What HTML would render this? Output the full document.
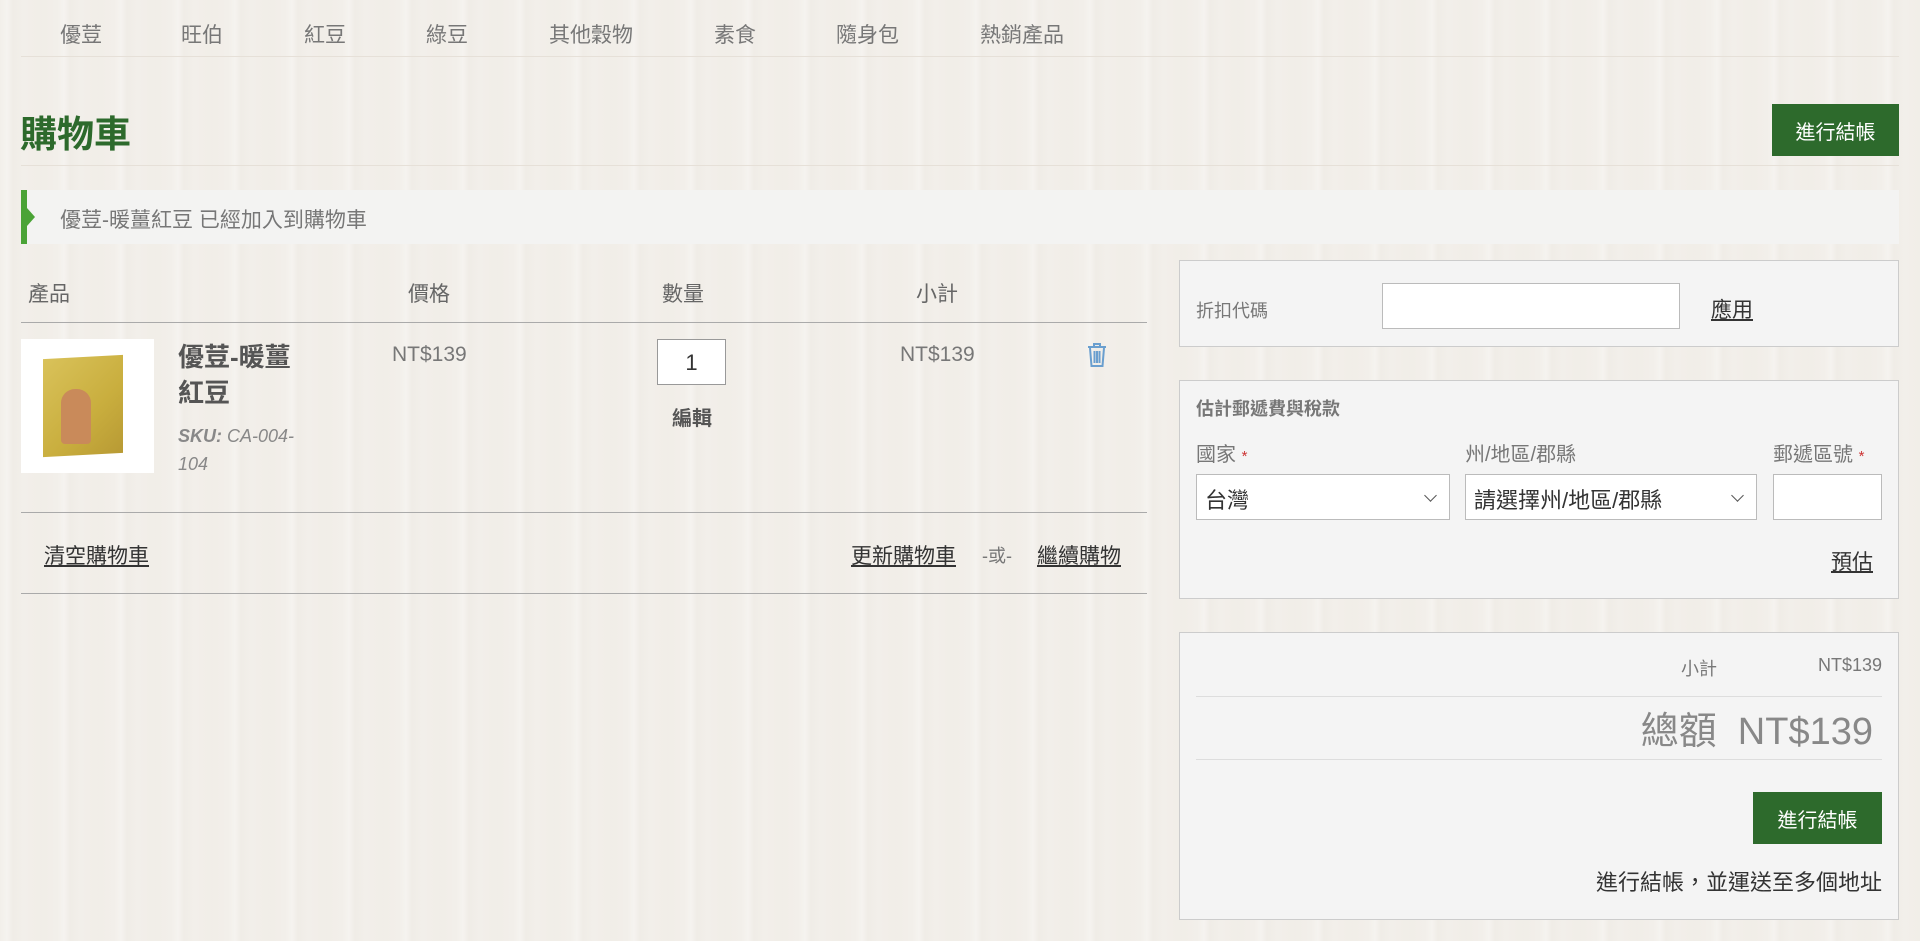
<!DOCTYPE html>
<html><head><meta charset="utf-8"><style>
*{box-sizing:border-box;margin:0;padding:0}
body{width:1920px;height:941px;overflow:hidden;position:relative;font-family:"Liberation Sans","Noto Sans CJK TC",sans-serif;color:#666;
background:#f2efea;
background-image:repeating-linear-gradient(90deg,rgba(255,255,255,0) 0,rgba(255,255,255,.25) 7px,rgba(220,212,200,.1) 13px,rgba(255,255,255,0) 23px,rgba(235,228,218,.15) 41px,rgba(255,255,255,0) 57px);}
.a{position:absolute;white-space:nowrap}
.nav{top:19px;font-size:21px;color:#777}
.u{text-decoration:underline;color:#333}
.box{position:absolute;background:#f4f4f4;border:1px solid #ccc}
.btn{position:absolute;background:#2d6a2c;color:#fff;font-size:20px;display:flex;align-items:center;justify-content:center}
.inp{position:absolute;background:#fff;border:1px solid #bbb}
.sel{position:absolute;background:#fff;border:1px solid #bbb;font-size:22px;color:#333;padding:8px 0 0 8px}
.sel:after{content:"";position:absolute;right:14px;top:16px;width:8px;height:8px;border-right:1.5px solid #555;border-bottom:1.5px solid #555;transform:rotate(45deg)}
.line{position:absolute;height:1px;background:#bbb}
.st{color:#c33;font-size:15px}
</style></head><body>
<div class="a nav" style="left:60px">優荳</div>
<div class="a nav" style="left:181px">旺伯</div>
<div class="a nav" style="left:304px">紅豆</div>
<div class="a nav" style="left:426px">綠豆</div>
<div class="a nav" style="left:549px">其他穀物</div>
<div class="a nav" style="left:714px">素食</div>
<div class="a nav" style="left:836px">隨身包</div>
<div class="a nav" style="left:980px">熱銷產品</div>
<div class="line" style="left:21px;width:1878px;top:56px;background:#e6e0d8"></div>
<div class="a" style="left:20px;top:104px;font-size:37px;font-weight:bold;color:#2d6a2c">購物車</div>
<div class="btn" style="left:1772px;top:104px;width:127px;height:52px">進行結帳</div>
<div class="line" style="left:21px;width:1878px;top:165px;background:#e6e0d8"></div>
<div class="a" style="left:21px;top:190px;width:1878px;height:54px;background:#f3f3f2"></div>
<div class="a" style="left:21px;top:190px;width:6px;height:54px;background:#4aa336"></div>
<div class="a" style="left:27px;top:208px;border-left:8px solid #4aa336;border-top:9px solid transparent;border-bottom:9px solid transparent"></div>
<div class="a" style="left:60px;top:204px;font-size:21px;color:#777">優荳-暖薑紅豆 已經加入到購物車</div>
<div class="a" style="left:28px;top:278px;font-size:21px">產品</div>
<div class="a" style="left:408px;top:278px;font-size:21px">價格</div>
<div class="a" style="left:662px;top:278px;font-size:21px">數量</div>
<div class="a" style="left:916px;top:278px;font-size:21px">小計</div>
<div class="line" style="left:21px;width:1126px;top:322px;background:#aaa"></div>
<div class="a" style="left:21px;top:339px;width:133px;height:134px;background:#fff">
<div style="position:absolute;left:22px;top:18px;width:80px;height:98px;background:linear-gradient(135deg,#d9c25a,#c9ae3e 60%,#b89a34);transform:skewY(-3deg)"></div>
<div style="position:absolute;left:40px;top:50px;width:30px;height:55px;border-radius:14px 14px 4px 4px;background:#c98a5a"></div></div>
<div class="a" style="left:178px;top:339px;font-size:26px;font-weight:bold;color:#555;line-height:36px">優荳-暖薑<br>紅豆</div>
<div class="a" style="left:178px;top:422px;font-size:18px;font-style:italic;color:#888;line-height:28px"><b>SKU:</b> CA-004-<br>104</div>
<div class="a" style="left:392px;top:343px;font-size:21px;color:#777">NT$139</div>
<div class="inp" style="left:657px;top:339px;width:69px;height:46px;border-color:#999;font-size:22px;color:#333;text-align:center;padding-top:10px">1</div>
<div class="a" style="left:672px;top:402px;font-size:20px;font-weight:bold;color:#555">編輯</div>
<div class="a" style="left:900px;top:343px;font-size:21px;color:#777">NT$139</div>
<svg class="a" style="left:1086px;top:342px" width="22" height="26" viewBox="0 0 22 26"><g fill="none" stroke="#6a9fcf" stroke-width="2"><path d="M2 5h18M8 5V2h6v3M4 6l1.5 18h11L18 6M8.5 9v12M11 9v12M13.5 9v12"/></g></svg>
<div class="line" style="left:21px;width:1126px;top:512px;background:#aaa"></div>
<div class="a u" style="left:44px;top:540px;font-size:21px">清空購物車</div>
<div class="a u" style="left:851px;top:540px;font-size:21px">更新購物車</div>
<div class="a" style="left:982px;top:542px;font-size:18px;color:#777">-或-</div>
<div class="a u" style="left:1037px;top:540px;font-size:21px">繼續購物</div>
<div class="line" style="left:21px;width:1126px;top:593px;background:#aaa"></div>

<div class="box" style="left:1179px;top:260px;width:720px;height:87px"></div>
<div class="a" style="left:1196px;top:297px;font-size:18px;color:#777">折扣代碼</div>
<div class="inp" style="left:1382px;top:283px;width:298px;height:46px"></div>
<div class="a u" style="left:1711px;top:294px;font-size:21px">應用</div>

<div class="box" style="left:1179px;top:380px;width:720px;height:219px"></div>
<div class="a" style="left:1196px;top:395px;font-size:18px;font-weight:bold;color:#777">估計郵遞費與稅款</div>
<div class="a" style="left:1196px;top:438px;font-size:20px;color:#777">國家 <span class="st">*</span></div>
<div class="a" style="left:1465px;top:438px;font-size:20px;color:#777">州/地區/郡縣</div>
<div class="a" style="left:1773px;top:438px;font-size:20px;color:#777">郵遞區號 <span class="st">*</span></div>
<div class="sel" style="left:1196px;top:474px;width:254px;height:46px">台灣</div>
<div class="sel" style="left:1465px;top:474px;width:292px;height:46px">請選擇州/地區/郡縣</div>
<div class="inp" style="left:1773px;top:474px;width:109px;height:46px"></div>
<div class="a u" style="left:1831px;top:546px;font-size:21px">預估</div>

<div class="box" style="left:1179px;top:632px;width:720px;height:288px"></div>
<div class="a" style="left:1681px;top:655px;font-size:18px;color:#777">小計</div>
<div class="a" style="right:38px;top:655px;font-size:18px;color:#777">NT$139</div>
<div class="line" style="left:1196px;width:686px;top:696px;background:#ddd"></div>
<div class="a" style="right:47px;top:700px;font-size:38px;color:#888">總額&nbsp;&nbsp;NT$139</div>
<div class="line" style="left:1196px;width:686px;top:759px;background:#ddd"></div>
<div class="btn" style="left:1753px;top:792px;width:129px;height:52px">進行結帳</div>
<div class="a" style="right:38px;top:865px;font-size:22px;color:#333">進行結帳，並運送至多個地址</div>
</body></html>
